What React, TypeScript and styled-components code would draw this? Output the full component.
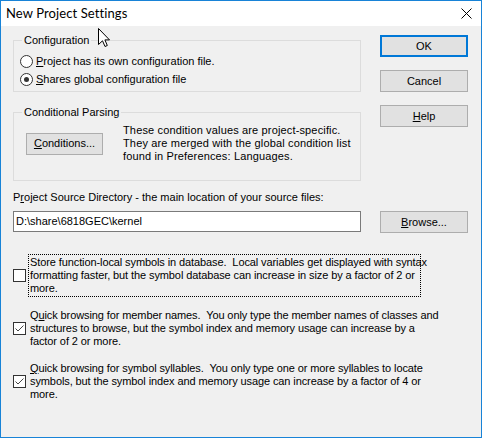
import React from "react";
import styled, { createGlobalStyle } from "styled-components";

const Global = createGlobalStyle`
  html, body { margin: 0; padding: 0; background: #ffffff; }
  * { box-sizing: border-box; }
`;

const Window = styled.div`
  position: relative;
  width: 482px;
  height: 438px;
  border: 1px solid #1883d7;
  background: #f0f0f0;
  display: flex;
  flex-direction: column;
  font-family: "Liberation Sans", Arial, sans-serif;
  font-size: 11px;
  line-height: 13px;
  color: #000;
`;

const TitleBar = styled.div`
  height: 25px;
  background: #ffffff;
  display: flex;
  align-items: center;
  justify-content: space-between;
  padding: 0 9px 0 5px;
`;

const Title = styled.div`
  font-family: Lato, "Noto Sans", sans-serif;
  font-size: 13px;
  letter-spacing: 0.1px;
  color: #000;
  line-height: 25px;
`;

const Body = styled.div`
  flex: 1;
  padding: 8px 0 0 12px;
  display: flex;
  flex-direction: column;
`;

const TopRow = styled.div`
  display: flex;
  align-items: flex-start;
`;

const LeftCol = styled.div`
  width: 348px;
  display: flex;
  flex-direction: column;
`;

const ButtonCol = styled.div`
  margin-left: 19px;
  margin-top: 1px;
  width: 88px;
  display: flex;
  flex-direction: column;
  gap: 13px;
`;

const Group = styled.fieldset<{ $top?: number }>`
  margin: ${(p) => p.$top ?? 0}px 0 0 0;
  min-width: 0;
  border: 1px solid #dcdcdc;
  padding: 0;
`;

const Legend = styled.legend`
  margin-left: 8px;
  padding: 0 2px;
  font-size: 11px;
  line-height: 13px;
`;

const RadioList = styled.div`
  display: flex;
  flex-direction: column;
  gap: 5px;
  padding: 8px 0 5px 6px;
`;

const RadioRow = styled.label`
  display: flex;
  align-items: center;
  gap: 3px;
  height: 13px;
`;

const RadioCircle = styled.span<{ $checked?: boolean }>`
  width: 13px;
  height: 13px;
  border-radius: 50%;
  border: 1px solid #333333;
  background: #ffffff;
  display: flex;
  align-items: center;
  justify-content: center;
  &::after {
    content: "";
    width: 5px;
    height: 5px;
    border-radius: 50%;
    background: ${(p) => (p.$checked ? "#333333" : "transparent")};
  }
`;

const ParsingRow = styled.div`
  display: flex;
  align-items: center;
  gap: 20px;
  padding: 5px 0 17px 12px;
`;

const Button = styled.div<{ $width?: number; $default?: boolean }>`
  width: ${(p) => p.$width ?? 88}px;
  height: 22px;
  flex-shrink: 0;
  background: #e1e1e1;
  border: ${(p) => (p.$default ? "2px solid #0078d7" : "1px solid #adadad")};
  display: flex;
  align-items: center;
  justify-content: center;
  font-size: 11px;
`;

const InfoText = styled.div`
  white-space: pre;
  letter-spacing: 0.15px;
`;

const SourceLabel = styled.div`
  margin-top: 10px;
`;

const InputRow = styled.div`
  margin-top: 7px;
  display: flex;
  align-items: flex-start;
  gap: 19px;
`;

const TextInput = styled.div`
  width: 348px;
  height: 21px;
  background: #ffffff;
  border: 1px solid #7a7a7a;
  padding-left: 2px;
  display: flex;
  align-items: center;
`;

const CheckList = styled.div`
  margin-top: 21px;
  display: flex;
  flex-direction: column;
  gap: 10px;
`;

const CheckRow = styled.div`
  display: flex;
  align-items: center;
  gap: 2px;
`;

const CheckBox = styled.span`
  width: 13px;
  height: 13px;
  border: 1px solid #333333;
  background: #ffffff;
  display: flex;
  align-items: center;
  justify-content: center;
  flex-shrink: 0;
`;

const CheckText = styled.div<{ $focused?: boolean }>`
  width: 393px;
  padding: 1px;
  border: 1px dotted ${(p) => (p.$focused ? "#000000" : "transparent")};
  white-space: pre;
  letter-spacing: -0.1px;
`;

const Cursor = styled.svg`
  position: absolute;
  left: 97px;
  top: 27px;
`;

const CloseIcon = () => (
  <svg width="11" height="11" viewBox="0 0 11 11">
    <path d="M0.5 0.5 L10.5 10.5 M10.5 0.5 L0.5 10.5" stroke="#000" strokeWidth="1" fill="none" />
  </svg>
);

const Check = () => (
  <svg width="11" height="11" viewBox="0 0 11 11">
    <path d="M1.5 5.5 L4 8 L9.5 2.5" stroke="#444" strokeWidth="1" fill="none" />
  </svg>
);

const Line = styled.span`
  display: block;
`;

export default function App() {
  return (
    <>
      <Global />
      <Window>
        <TitleBar>
          <Title>New Project Settings</Title>
          <CloseIcon />
        </TitleBar>
        <Body>
          <TopRow>
            <LeftCol>
              <Group>
                <Legend>Configuration</Legend>
                <RadioList>
                  <RadioRow>
                    <RadioCircle />
                    <span>
                      <u>P</u>roject has its own configuration file.
                    </span>
                  </RadioRow>
                  <RadioRow>
                    <RadioCircle $checked />
                    <span>
                      <u>S</u>hares global configuration file
                    </span>
                  </RadioRow>
                </RadioList>
              </Group>
              <Group $top={14}>
                <Legend>Conditional Parsing</Legend>
                <ParsingRow>
                  <Button $width={77}>
                    <span>
                      <u>C</u>onditions...
                    </span>
                  </Button>
                  <InfoText>
                    <Line>These condition values are project-specific.</Line>
                    <Line>They are merged with the global condition list</Line>
                    <Line>found in Preferences: Languages.</Line>
                  </InfoText>
                </ParsingRow>
              </Group>
            </LeftCol>
            <ButtonCol>
              <Button $default>OK</Button>
              <Button>Cancel</Button>
              <Button>
                <span>
                  <u>H</u>elp
                </span>
              </Button>
            </ButtonCol>
          </TopRow>
          <SourceLabel>
            P<u>r</u>oject Source Directory - the main location of your source files:
          </SourceLabel>
          <InputRow>
            <TextInput>D:\share\6818GEC\kernel</TextInput>
            <Button>
              <span>
                <u>B</u>rowse...
              </span>
            </Button>
          </InputRow>
          <CheckList>
            <CheckRow>
              <CheckBox />
              <CheckText $focused>
                <Line>Store function-local symbols in database.  Local variables get displayed with syntax</Line>
                <Line>formatting faster, but the symbol database can increase in size by a factor of 2 or</Line>
                <Line>more.</Line>
              </CheckText>
            </CheckRow>
            <CheckRow>
              <CheckBox>
                <Check />
              </CheckBox>
              <CheckText>
                <Line>
                  Q<u>u</u>ick browsing for member names.  You only type the member names of classes and
                </Line>
                <Line>structures to browse, but the symbol index and memory usage can increase by a</Line>
                <Line>factor of 2 or more.</Line>
              </CheckText>
            </CheckRow>
            <CheckRow>
              <CheckBox>
                <Check />
              </CheckBox>
              <CheckText>
                <Line>
                  <u>Q</u>uick browsing for symbol syllables.  You only type one or more syllables to locate
                </Line>
                <Line>symbols, but the symbol index and memory usage can increase by a factor of 4 or</Line>
                <Line>more.</Line>
              </CheckText>
            </CheckRow>
          </CheckList>
        </Body>
        <Cursor width="13" height="20" viewBox="0 0 13 20">
          <path
            d="M0.5 0.5 L0.5 16.5 L4.5 12.8 L7 18.5 L9.3 17.5 L6.9 11.9 L11.5 11.9 Z"
            fill="#fff"
            stroke="#000"
            strokeWidth="1"
          />
        </Cursor>
      </Window>
    </>
  );
}
